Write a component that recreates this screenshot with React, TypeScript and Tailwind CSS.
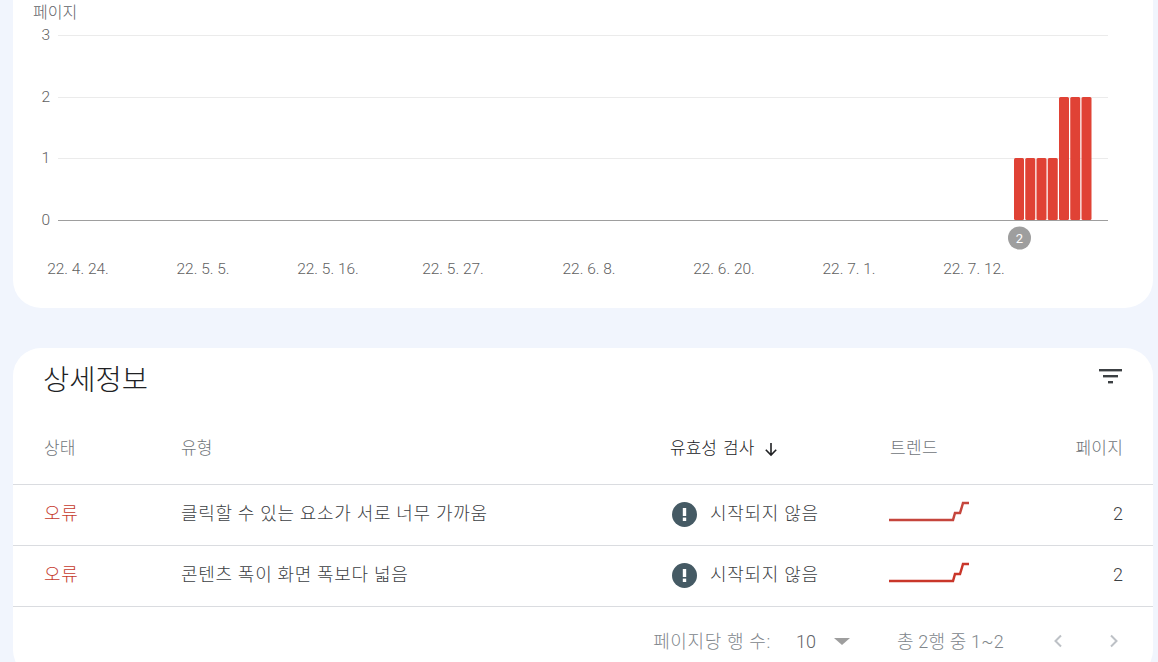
const font = '[font-family:Roboto,"Noto_Sans_CJK_KR",sans-serif]';

const yTicks = [
  { label: '3', y: 35 },
  { label: '2', y: 97 },
  { label: '1', y: 158 },
];

const xTicks = [
  { label: '22. 4. 24.', x: 78 },
  { label: '22. 5. 5.', x: 203 },
  { label: '22. 5. 16.', x: 328 },
  { label: '22. 5. 27.', x: 453 },
  { label: '22. 6. 8.', x: 589 },
  { label: '22. 6. 20.', x: 724 },
  { label: '22. 7. 1.', x: 849 },
  { label: '22. 7. 12.', x: 974 },
];

const bars = [1, 1, 1, 1, 2, 2, 2];

const rows = [
  { name: '클릭할 수 있는 요소가 서로 너무 가까움', faded: true },
  { name: '콘텐츠 폭이 화면 폭보다 넓음', faded: false },
];

const Chart = () => (
  <svg width="1140" height="290" viewBox="13 0 1140 290" className="block">
    <g fontFamily='Roboto, "Noto Sans CJK KR", sans-serif' fontSize="15.500" fontWeight="300" fill="#616161">
      <text x="33" y="18" fontSize="16" fill="#5f6368">페이지</text>
      {yTicks.map(t => (
        <g key={t.label}>
          <text x="50" y={t.y + 5} textAnchor="end">{t.label}</text>
          <line x1="58" x2="1108" y1={t.y + 0.5} y2={t.y + 0.5} stroke="#ebebeb" />
        </g>
      ))}
      <text x="50" y="225" textAnchor="end">0</text>
      {xTicks.map(t => (
        <text key={t.label} x={t.x} y="274" textAnchor="middle">{t.label}</text>
      ))}
    </g>
    {bars.map((v, i) => {
      const h = v === 2 ? 123 : 62;
      return <rect key={i} x={1014 + i * 11.25} y={220 - h} width="10" height={h} rx="1.500" fill="#e04235" />;
    })}
    <line x1="58" x2="1108" y1="220.5" y2="220.5" stroke="#9e9e9e" />
    <circle cx="1019.500" cy="238" r="11.500" fill="#9e9e9e" />
    <text x="1019.500" y="242.500" textAnchor="middle" fontSize="13" fontFamily="Roboto, sans-serif" fill="#fff">2</text>
  </svg>
);

const Trend = ({ faded }: { faded: boolean }) => (
  <svg width="80" height="22" viewBox="0 0 80 22" className="block">
    <path
      d="M0 20H64L66 13H71L73 6.500L74 3H80"
      fill="none"
      stroke={faded ? '#c5453c' : '#c9362a'}
      strokeWidth="2.500"
    />
  </svg>
);

const NotStarted = () => (
  <span className="flex h-[25px] w-[25px] items-center justify-center rounded-full bg-[#455a64]">
    <svg width="5" height="13" viewBox="0 0 5 13">
      <rect x="0.800" y="0" width="3.400" height="8" fill="#fff" />
      <rect x="0.800" y="9.600" width="3.400" height="3.400" fill="#fff" />
    </svg>
  </span>
);

export default function App() {
  return (
    <div className={`h-[662px] w-[1158px] overflow-hidden bg-[#f1f5fd] pl-[13px] pr-[5px] ${font}`}>
      {/* 차트 카드 */}
      <div className="h-[308px] rounded-b-[28px] bg-white">
        <Chart />
      </div>

      {/* 상세정보 카드 */}
      <div className="mt-[40px] h-[330px] rounded-[28px] bg-white">
        <div className="flex h-[62px] items-center justify-between pr-[31px] pl-[30px]">
          <h2 className="pt-[5px] text-[28.5px] leading-none font-light text-[#202124]">상세정보</h2>
          <svg width="24" height="24" viewBox="0 0 24 24" fill="#3c4043" className="mb-[7px]">
            <rect x="1" y="5" width="23" height="2.400" />
            <rect x="5" y="11" width="15" height="2.400" />
            <rect x="10" y="17" width="5" height="2.400" />
          </svg>
        </div>

        <div className="grid h-[75px] grid-cols-[137px_490px_219px_1fr_auto] items-center border-b border-[#dadce0] pt-[4px] pr-[30px] pl-[30px] text-[17px] font-light text-[#70757a]">
          <div className="pl-px">상태</div>
          <div className="pl-px">유형</div>
          <div className="flex items-center gap-[9px] text-[#202124] [word-spacing:2px]">
            유효성 검사
            <svg width="16" height="16" viewBox="0 0 16 16" fill="none" stroke="#202124" strokeWidth="1.600">
              <path d="M8 2V14M2.800 8.800L8 14L13.200 8.800" />
            </svg>
          </div>
          <div className="pl-px tracking-[0.3px]">트렌드</div>
          <div className="tracking-[0.2px]">페이지</div>
        </div>

        {rows.map(row => (
          <div
            key={row.name}
            className="grid h-[61px] grid-cols-[137px_490px_219px_1fr_auto] items-center border-b border-[#dadce0] pr-[30px] pl-[30px] text-[18px] font-light tracking-[0.7px] text-[#3c4043]"
          >
            <div className="pb-[3px] pl-px text-[#c5392c]">오류</div>
            <div className="pb-[3px] pl-px">{row.name}</div>
            <div className="flex items-center gap-[13px] pb-px pl-[2px]">
              <NotStarted />
              <span className="pb-[2px]">시작되지 않음</span>
            </div>
            <div className="pb-[9px]">
              <Trend faded={row.faded} />
            </div>
            <div className="pb-[3px] tracking-normal">2</div>
          </div>
        ))}

        <div className="flex h-[70px] items-center justify-end pr-[31px] pb-[2px] text-[18px] font-light text-[#80868b]">
          <span className="tracking-[0.65px]">페이지당 행 수:</span>
          <span className="ml-[25px] text-[#5f6368]">10</span>
          <span className="mt-[1px] ml-[18px] h-0 w-0 border-x-[8px] border-t-[7px] border-x-transparent border-t-[#9e9e9e]" />
          <span className="ml-[47px] tracking-[0.2px]">총 2행 중 1~2</span>
          <svg width="16" height="16" viewBox="0 0 16 16" fill="none" stroke="#bdc1c6" strokeWidth="2" className="ml-[46px]">
            <path d="M11 2.500L5.500 8L11 13.500" />
          </svg>
          <svg width="16" height="16" viewBox="0 0 16 16" fill="none" stroke="#bdc1c6" strokeWidth="2" className="ml-[40px]">
            <path d="M5 2.500L10.500 8L5 13.500" />
          </svg>
        </div>
      </div>
    </div>
  );
}
